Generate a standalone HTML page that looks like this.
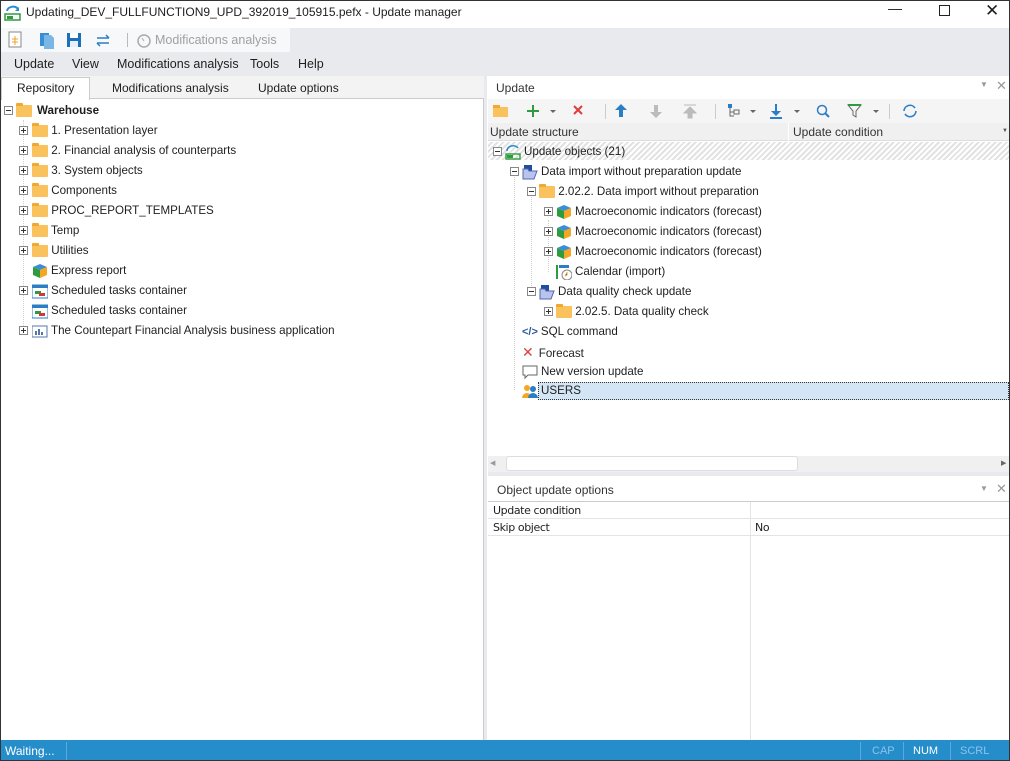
<!DOCTYPE html>
<html><head><meta charset="utf-8"><style>
*{box-sizing:border-box;margin:0;padding:0}
body{width:1010px;height:761px;overflow:hidden;font-family:"Liberation Sans",sans-serif;font-size:12px;color:#1e1e1e;background:#fff;position:relative}
.a{position:absolute;white-space:nowrap}
.fold{display:inline-block;width:16px;height:12px;background:#f9c25d;border-radius:1px;position:relative;vertical-align:middle}
.fold:before{content:"";position:absolute;left:0;top:-2px;width:7px;height:3px;background:#f0a830;border-radius:1px 1px 0 0}
.pm{position:absolute;width:9px;height:9px;border:1px solid #888;background:#fff}
.pm:before{content:"";position:absolute;left:1px;top:3px;width:5px;height:1px;background:#333}
.pm.p:after{content:"";position:absolute;left:3px;top:1px;width:1px;height:5px;background:#333}
.row{position:absolute;height:20px;line-height:20px;white-space:nowrap;font-size:11.6px}
.cube{display:inline-block;width:16px;height:16px;vertical-align:middle;margin-right:3px}
.dl{position:absolute;width:0;border-left:1px dotted #d0d0d0}
</style></head><body>
<div class="a" style="left:0;top:0;width:1010px;height:761px;border:1px solid #333;z-index:9;pointer-events:none"></div>
<svg class="a" style="left:4px;top:3px" width="18" height="18" viewBox="0 0 18 18"><path d="M3 8a6 5 0 0 1 11-2" stroke="#2a8bd0" stroke-width="2" fill="none"/><path d="M15 4v4h-4" fill="#2a8bd0"/><rect x="1" y="11" width="15" height="6" fill="none" stroke="#2e9b3e" stroke-width="1.5"/><rect x="3" y="13" width="6" height="3" fill="#2e9b3e"/></svg>
<div class="a" style="left:26px;top:5px;font-size:12px">Updating_DEV_FULLFUNCTION9_UPD_392019_105915.pefx - Update manager</div>
<div class="a" style="left:888px;top:0;font-size:14px">—</div>
<div class="a" style="left:939px;top:5px;width:11px;height:11px;border:1px solid #222"></div>
<div class="a" style="left:985px;top:0;font-size:17px;line-height:22px">✕</div>
<div class="a" style="left:0;top:28px;width:1010px;height:48px;background:#e9eaed"></div>
<div class="a" style="left:0;top:28px;width:290px;height:24px;background:#f7f8f9"></div>
<svg class="a" style="left:7px;top:31px" width="110" height="18"><rect x="2" y="1" width="12" height="15" fill="#fff" stroke="#888"/><path d="M5 8h6M5 11h6M8 5v9" stroke="#f0a030"/><rect x="33" y="2" width="9" height="13" fill="#3a8fd4"/><path d="M37 4h7l3 3v11h-10z" fill="#7ab6e6"/><rect x="60" y="2" width="14" height="14" fill="#1d6fb8"/><rect x="63" y="2" width="8" height="5" fill="#fff"/><rect x="63" y="10" width="8" height="6" fill="#e6f0fa"/><path d="M90 7h12M99 4l3 3M90 12h12M93 15l-3-3" stroke="#2a7ec6" stroke-width="1.5" fill="none"/></svg>
<div class="a" style="left:127px;top:33px;width:1px;height:14px;background:#bbb"></div>
<svg class="a" style="left:136px;top:32px" width="16" height="16"><circle cx="8" cy="9" r="6" fill="none" stroke="#aaa" stroke-width="1.5"/><path d="M8 9l-2-3" stroke="#aaa"/></svg>
<div class="a" style="left:155px;top:33px;font-size:12.5px;color:#a0a0a0">Modifications analysis</div>
<div class="a" style="left:14px;top:57px;font-size:12.5px">Update</div>
<div class="a" style="left:72px;top:57px;font-size:12.5px">View</div>
<div class="a" style="left:117px;top:57px;font-size:12.5px">Modifications analysis</div>
<div class="a" style="left:250px;top:57px;font-size:12.5px">Tools</div>
<div class="a" style="left:298px;top:57px;font-size:12.5px">Help</div>
<div class="a" style="left:0;top:76px;width:484px;height:664px;background:#fff;border-right:1px solid #ccc"></div>
<div class="a" style="left:0;top:76px;width:484px;height:23px;background:#f3f3f3;border-bottom:1px solid #ccc"></div>
<div class="a" style="left:1px;top:77px;width:89px;height:23px;background:#fff;border:1px solid #ccc;border-bottom:none"></div>
<div class="a" style="left:17px;top:81px">Repository</div>
<div class="a" style="left:112px;top:81px">Modifications analysis</div>
<div class="a" style="left:258px;top:81px">Update options</div>
<div class="a" style="left:484px;top:76px;width:3px;height:664px;background:#e9eaed"></div>
<div class="dl" style="left:23px;top:120px;height:210px"></div>
<div class="pm" style="left:4px;top:106px"></div>
<div class="row" style="left:16px;top:101px"><span class="fold" style="margin-right:5px"></span><b>Warehouse</b></div>
<div class="pm p" style="left:19px;top:126px"></div><div class="row" style="left:32px;top:121px"><span class="fold"></span> 1. Presentation layer</div>
<div class="pm p" style="left:19px;top:146px"></div><div class="row" style="left:32px;top:141px"><span class="fold"></span> 2. Financial analysis of counterparts</div>
<div class="pm p" style="left:19px;top:166px"></div><div class="row" style="left:32px;top:161px"><span class="fold"></span> 3. System objects</div>
<div class="pm p" style="left:19px;top:186px"></div><div class="row" style="left:32px;top:181px"><span class="fold"></span> Components</div>
<div class="pm p" style="left:19px;top:206px"></div><div class="row" style="left:32px;top:201px"><span class="fold"></span> PROC_REPORT_TEMPLATES</div>
<div class="pm p" style="left:19px;top:226px"></div><div class="row" style="left:32px;top:221px"><span class="fold"></span> Temp</div>
<div class="pm p" style="left:19px;top:246px"></div><div class="row" style="left:32px;top:241px"><span class="fold"></span> Utilities</div>
<svg width="0" height="0" style="position:absolute"><defs><g id="cb"><path d="M8 1l7 3-7 3-7-3z" fill="#3a8fd4"/><path d="M1 4l7 3v8l-7-3z" fill="#2e9b3e"/><path d="M15 4l-7 3v8l7-3z" fill="#f5a623"/></g><g id="st"><rect x="0" y="2" width="16" height="13" fill="#fff" stroke="#2a7ec6"/><rect x="0" y="2" width="16" height="3" fill="#2a7ec6"/><rect x="3" y="8" width="6" height="3" fill="#2e9b3e"/><rect x="7" y="10" width="6" height="3" fill="#d33"/></g></defs></svg>
<div class="row" style="left:32px;top:261px"><svg class="cube"><use href="#cb"/></svg>Express report</div>
<div class="pm p" style="left:19px;top:286px"></div><div class="row" style="left:32px;top:281px"><svg class="cube"><use href="#st"/></svg>Scheduled tasks container</div>
<div class="row" style="left:32px;top:301px"><svg class="cube"><use href="#st"/></svg>Scheduled tasks container</div>
<div class="pm p" style="left:19px;top:326px"></div><div class="row" style="left:32px;top:321px"><svg class="cube"><rect x="0" y="3" width="15" height="11" fill="#fff" stroke="#5577aa"/><rect x="3" y="8" width="2" height="4" fill="#5577aa"/><rect x="6" y="6" width="2" height="6" fill="#5577aa"/><rect x="9" y="9" width="2" height="3" fill="#5577aa"/></svg>The Countepart Financial Analysis business application</div>
<div class="a" style="left:488px;top:76px;width:521px;height:664px;background:#fff"></div>
<div class="a" style="left:496px;top:81px;color:#333">Update</div>
<div class="a" style="left:980px;top:80px;color:#999;font-size:8px">▼</div>
<div class="a" style="left:996px;top:78px;color:#999;font-size:13px">✕</div>
<div class="a" style="left:488px;top:99px;width:521px;height:24px;background:#f5f5f5"></div>
<svg class="a" style="left:488px;top:100px" width="440" height="22"><rect x="5" y="7" width="15" height="10" fill="#f9c25d"/><rect x="5" y="5" width="7" height="3" fill="#f0a830"/><path d="M45 5v12M39 11h12" stroke="#2e9b3e" stroke-width="2"/><path d="M62 10l3 3 3-3z" fill="#666"/><path d="M86 6l8 8M94 6l-8 8" stroke="#e03c3c" stroke-width="2"/><rect x="117" y="4" width="1" height="15" fill="#ccc"/><path d="M133 4l-6 6h4v7h4v-7h4z" fill="#2a7ec6"/><path d="M168 18l-6-6h4V5h4v7h4z" fill="#bbb"/><path d="M196 5h12M202 7l-6 6h4v5h4v-5h4z" fill="#bbb" stroke="#bbb"/><rect x="227" y="4" width="1" height="15" fill="#ccc"/><rect x="240" y="4" width="4" height="4" fill="#2a7ec6"/><path d="M242 8v8h4M242 12h4" stroke="#666" fill="none"/><rect x="246" y="10" width="5" height="4" fill="none" stroke="#666"/><path d="M262 10l3 3 3-3z" fill="#666"/><path d="M287 4v7h-4l5 5 5-5h-4V4z" fill="#2a7ec6"/><rect x="282" y="17" width="12" height="2" fill="#2a7ec6"/><path d="M306 10l3 3 3-3z" fill="#666"/><circle cx="334" cy="10" r="4.5" fill="none" stroke="#2a7ec6" stroke-width="1.5"/><path d="M337 13l4 4" stroke="#2a7ec6" stroke-width="2"/><path d="M360 5h13l-5 6v6l-3-2v-4z" fill="none" stroke="#666"/><rect x="360" y="4" width="13" height="2" fill="#2e9b3e"/><path d="M385 10l3 3 3-3z" fill="#666"/><rect x="401" y="4" width="1" height="15" fill="#ccc"/><path d="M416 11a6 6 0 0 1 11-3M428 11a6 6 0 0 1-11 3" stroke="#2a7ec6" stroke-width="1.6" fill="none"/></svg>
<div class="a" style="left:488px;top:123px;width:521px;height:18px;background:#f0f0f0;border-bottom:1px solid #ddd"></div>
<div class="a" style="left:788px;top:123px;width:1px;height:18px;background:#fff"></div>
<div class="a" style="left:490px;top:125px;color:#333">Update structure</div>
<div class="a" style="left:793px;top:125px;color:#333">Update condition</div>
<div class="a" style="left:1002px;top:128px;font-size:6px;color:#555">▼</div>
<div class="a" style="left:488px;top:142px;width:521px;height:18px;background:repeating-linear-gradient(135deg,#fff 0 2px,#e2e2e2 2px 4px)"></div>
<div class="dl" style="left:514px;top:170px;height:220px"></div>
<div class="dl" style="left:531px;top:190px;height:102px"></div>
<div class="dl" style="left:548px;top:220px;height:52px"></div>
<div class="pm" style="left:493px;top:147px"></div>
<div class="row" style="left:505px;top:142px"><svg class="cube"><path d="M2 7a6 5 0 0 1 11-3" stroke="#2a8bd0" stroke-width="1.6" fill="none"/><rect x="1" y="10" width="14" height="5" fill="none" stroke="#2e9b3e" stroke-width="1.4"/><rect x="2" y="11" width="6" height="3" fill="#2e9b3e"/></svg>Update objects (21)</div>
<svg width="0" height="0" style="position:absolute"><defs><g id="fp"><rect x="2" y="1" width="8" height="10" fill="#1d4fa0"/><path d="M1 5h5l1 2h8l-3 8H1z" fill="#b9c4ee" stroke="#5567aa"/></g></defs></svg>
<div class="pm" style="left:510px;top:167px"></div><div class="row" style="left:522px;top:162px"><svg class="cube"><use href="#fp"/></svg>Data import without preparation update</div>
<div class="pm" style="left:527px;top:187px"></div><div class="row" style="left:539px;top:182px"><span class="fold"></span> 2.02.2. Data import without preparation</div>
<div class="pm p" style="left:544px;top:207px"></div><div class="row" style="left:556px;top:202px"><svg class="cube"><use href="#cb"/></svg>Macroeconomic indicators (forecast)</div>
<div class="pm p" style="left:544px;top:227px"></div><div class="row" style="left:556px;top:222px"><svg class="cube"><use href="#cb"/></svg>Macroeconomic indicators (forecast)</div>
<div class="pm p" style="left:544px;top:247px"></div><div class="row" style="left:556px;top:242px"><svg class="cube"><use href="#cb"/></svg>Macroeconomic indicators (forecast)</div>
<div class="row" style="left:556px;top:262px"><svg class="cube"><rect x="0" y="1" width="2" height="14" fill="#2e9b3e"/><rect x="3" y="1" width="10" height="3" fill="#2a7ec6"/><circle cx="11" cy="11" r="5" fill="#fff" stroke="#888"/><path d="M11 8v3l-2 1" stroke="#f0a030"/></svg>Calendar (import)</div>
<div class="pm" style="left:527px;top:287px"></div><div class="row" style="left:539px;top:282px"><svg class="cube"><use href="#fp"/></svg>Data quality check update</div>
<div class="pm p" style="left:544px;top:307px"></div><div class="row" style="left:556px;top:302px"><span class="fold"></span> 2.02.5. Data quality check</div>
<div class="row" style="left:522px;top:322px"><span style="color:#2a5aa0;font-weight:bold;font-size:11px;margin-right:3px">&lt;/&gt;</span>SQL command</div>
<div class="row" style="left:522px;top:342px"><span style="color:#e03c3c;font-size:14px;margin-right:5px">✕</span>Forecast</div>
<div class="row" style="left:522px;top:362px"><svg class="cube"><path d="M1 2h14v9H6l-3 3v-3H1z" fill="#fff" stroke="#666"/></svg>New version update</div>
<div class="a" style="left:538px;top:382px;width:471px;height:18px;background:#d4e6f5;border:1px dotted #333"></div>
<div class="row" style="left:522px;top:381px"><svg class="cube"><circle cx="5" cy="5" r="3" fill="#f5a623"/><path d="M0 15a5 5 0 0 1 10 0z" fill="#f5a623"/><circle cx="11" cy="6" r="3" fill="#2a7ec6"/><path d="M6 15a5 5 0 0 1 10 0z" fill="#2a7ec6"/></svg>USERS</div>
<div class="a" style="left:488px;top:456px;width:521px;height:16px;background:#f0f0f0"></div>
<div class="a" style="left:506px;top:456px;width:292px;height:15px;background:#fff;border:1px solid #ddd;border-radius:3px"></div>
<div class="a" style="left:490px;top:459px;font-size:7px;color:#999">◀</div>
<div class="a" style="left:1001px;top:459px;font-size:7px;color:#666">▶</div>
<div class="a" style="left:488px;top:472px;width:521px;height:4px;background:#e9eaed"></div>
<div class="a" style="left:497px;top:483px;color:#333">Object update options</div>
<div class="a" style="left:980px;top:484px;color:#999;font-size:8px">▼</div>
<div class="a" style="left:996px;top:481px;color:#999;font-size:13px">✕</div>
<div class="a" style="left:488px;top:501px;width:521px;height:239px;border-top:1px solid #ccc"></div>
<div class="a" style="left:488px;top:518px;width:521px;height:1px;background:#e4e4e4"></div>
<div class="a" style="left:488px;top:535px;width:521px;height:1px;background:#e4e4e4"></div>
<div class="a" style="left:750px;top:502px;width:1px;height:238px;background:#e4e4e4"></div>
<div class="a" style="left:493px;top:504px;font-family:'DejaVu Sans',sans-serif;font-size:11px;letter-spacing:-0.4px">Update condition</div>
<div class="a" style="left:493px;top:521px;font-family:'DejaVu Sans',sans-serif;font-size:11px;letter-spacing:-0.4px">Skip object</div>
<div class="a" style="left:755px;top:521px;font-family:'DejaVu Sans',sans-serif;font-size:11px;letter-spacing:-0.4px">No</div>
<div class="a" style="left:0;top:740px;width:1010px;height:21px;background:#268dcb"></div>
<div class="a" style="left:5px;top:744px;color:#fff">Waiting...</div>
<div class="a" style="left:66px;top:742px;width:1px;height:18px;background:#5aaae0"></div>
<div class="a" style="left:860px;top:742px;width:1px;height:18px;background:#5aaae0"></div>
<div class="a" style="left:903px;top:742px;width:1px;height:18px;background:#5aaae0"></div>
<div class="a" style="left:950px;top:742px;width:1px;height:18px;background:#5aaae0"></div>
<div class="a" style="left:872px;top:745px;color:#8cc3ea;font-size:11px">CAP</div>
<div class="a" style="left:913px;top:745px;color:#fff;font-size:11px">NUM</div>
<div class="a" style="left:960px;top:745px;color:#8cc3ea;font-size:11px">SCRL</div>
</body></html>
